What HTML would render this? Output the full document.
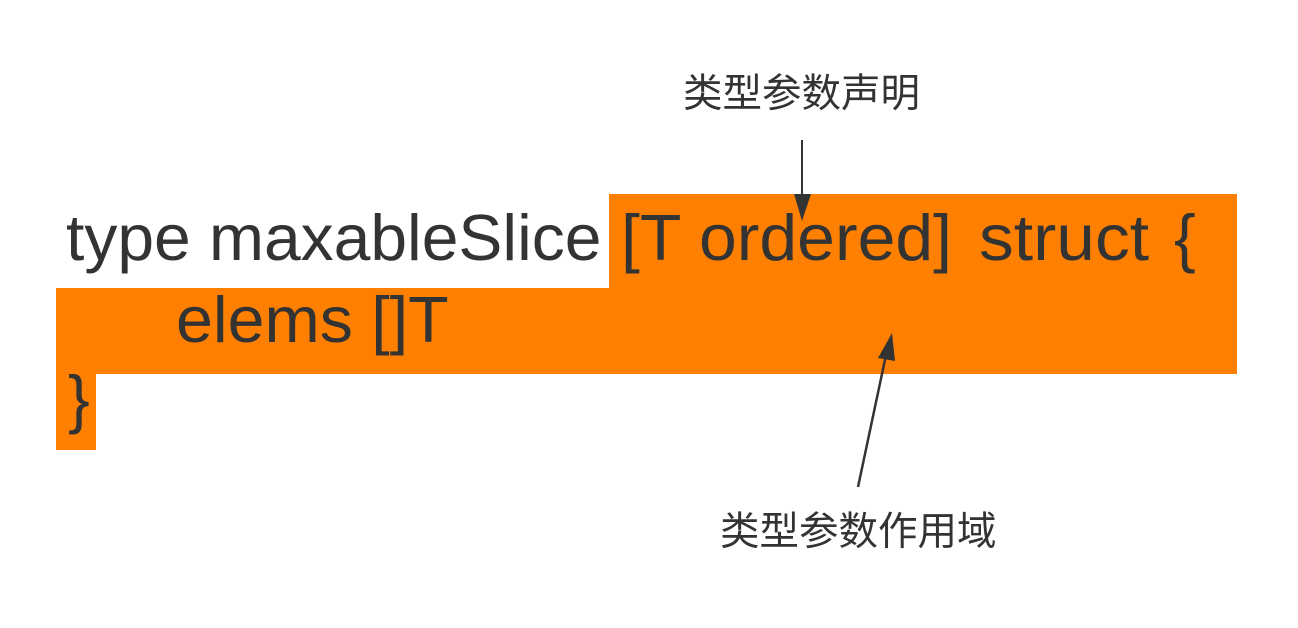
<!DOCTYPE html>
<html><head><meta charset="utf-8"><style>
html,body{margin:0;padding:0;background:#fff;width:1298px;height:628px;overflow:hidden;position:relative}
.o{position:absolute;background:#ff8000}
.t{position:absolute;font-family:"Liberation Sans","Noto Sans CJK SC",sans-serif;color:#333;white-space:pre;line-height:1;transform-origin:0 0}
.c{font-size:65px}
.l{font-size:39.5px}
</style></head><body>
<div class="o" style="left:609px;top:194px;width:628px;height:95px"></div>
<div class="o" style="left:56px;top:288px;width:1181px;height:86px"></div>
<div class="o" style="left:56px;top:373px;width:40px;height:77px"></div>
<div class="t c" style="left:66px;top:205px;transform:scaleX(1.015)">type maxableSlice</div>
<div class="t c" style="left:621px;top:205px;transform:scaleX(1.045)">[T ordered]</div>
<div class="t c" style="left:979px;top:205px;transform:scaleX(1.07)">struct</div>
<div class="t c" style="left:1174px;top:205px">{</div>
<div class="t c" style="left:176px;top:287px;transform:scaleX(1.02)">elems []T</div>
<div class="t c" style="left:68px;top:366px">}</div>
<div class="t l" style="left:683px;top:75px">类型参数声明</div>
<div class="t l" style="left:720px;top:513px">类型参数作用域</div>
<svg width="1298" height="628" style="position:absolute;left:0;top:0">
<line x1="802" y1="140" x2="802" y2="200" stroke="#333" stroke-width="2"/>
<polygon points="794,194 811,194 802,221" fill="#333"/>
<line x1="858" y1="487" x2="886" y2="355" stroke="#333" stroke-width="2.5"/>
<polygon points="892,333 878,358 895,361" fill="#333"/>
</svg>
</body></html>
